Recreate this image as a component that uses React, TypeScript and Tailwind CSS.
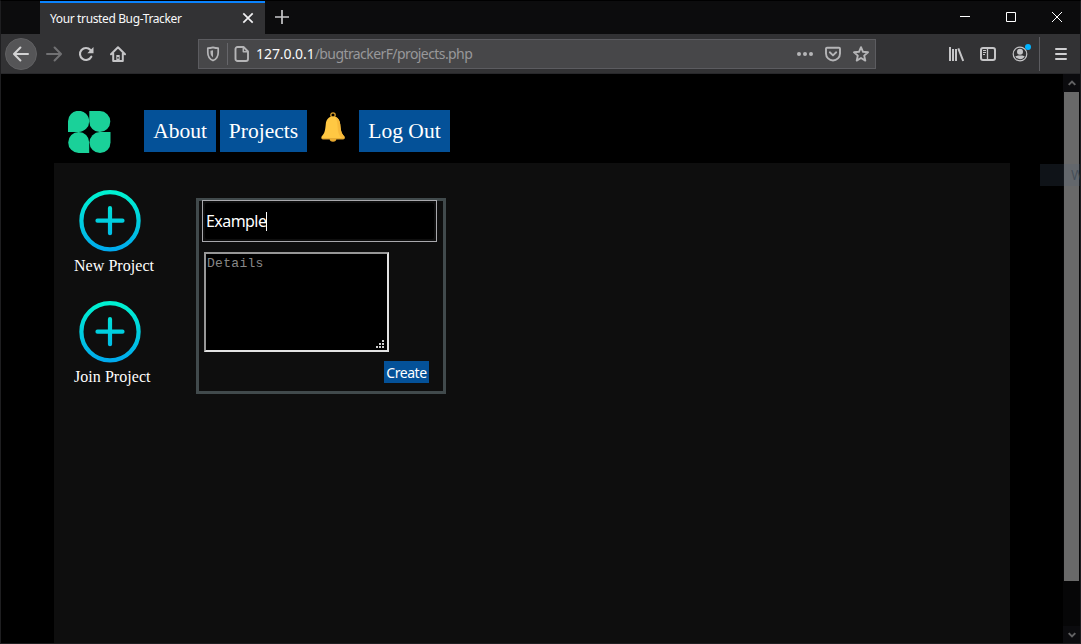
import React from "react";

const ui = "font-['Noto_Sans','Open_Sans',sans-serif]";
const serif = "font-['Liberation_Serif',serif]";

function TabStrip() {
  return (
    <div className="flex h-[33px] shrink-0 bg-[#0c0c0d]">
      <div className="ml-[39px] flex h-[33px] w-[225px] items-center border-t-2 border-[#0a84ff] bg-[#323234] pl-[10px]">
        <span className={`${ui} w-[191px] whitespace-nowrap text-[12px] leading-[18px] tracking-[-0.37px] text-[#f9f9fa]`}>
          Your trusted Bug-Tracker
        </span>
        <svg className="-mt-[2px]" width="14" height="14" viewBox="0 0 14 14" fill="none" stroke="#f0f0f2" strokeWidth="1.7">
          <path d="M2.3 2.3l9.4 9.4M11.7 2.3l-9.4 9.4" />
        </svg>
      </div>
      <svg className="ml-[10px] mt-[9px]" width="14" height="14" viewBox="0 0 14 14" fill="none" stroke="#c8c8ca" strokeWidth="1.7">
        <path d="M7 0v14M0 7h14" />
      </svg>
      <div className="ml-auto flex pt-[11px]">
        <svg width="10" height="10" viewBox="0 0 10 10"><path d="M0 4.5h10" stroke="#fff" /></svg>
        <svg className="ml-9" width="10" height="10" viewBox="0 0 10 10"><path d="M.5.5h9v9h-9z" fill="none" stroke="#fff" /></svg>
        <svg className="ml-9 mr-[18px]" width="10" height="10" viewBox="0 0 10 10"><path d="M0 0l10 10M10 0L0 10" fill="none" stroke="#fff" /></svg>
      </div>
    </div>
  );
}

function AddressBar() {
  return (
    <div className="ml-[72px] flex h-[30px] w-[678px] shrink-0 items-center border border-[#5c5c60] bg-[#474749]">
      <svg className="ml-[6px] shrink-0" width="16" height="16" viewBox="0 0 16 16" fill="none" stroke="#b5b5b7" strokeWidth="1.7">
        <path d="M8 1.4c-2 .6-3.500.8-5.200.8v4.200c0 3.700 1.700 6.600 5.200 8.200 3.500-1.600 5.200-4.500 5.200-8.200V2.200C11.500 2.200 10 2 8 1.400z" strokeLinejoin="round" />
        <path d="M8 4.200v7.200C6.200 10 5.500 8.500 5.500 6.500V4.700z" fill="#b5b5b7" stroke="none" />
      </svg>
      <div className="ml-[6px] h-[22px] w-px shrink-0 bg-[#66666a]" />
      <svg className="ml-[6px] shrink-0" width="16" height="16" viewBox="0 0 16 16" fill="none" stroke="#b5b5b7" strokeWidth="1.900" strokeLinejoin="round">
        <path d="M3.500 1h6L14 5.500V13a2 2 0 0 1-2 2H3.500a2 2 0 0 1-2-2V3a2 2 0 0 1 2-2z" />
        <path d="M9.300 1v4.700H14" strokeWidth="1.500" />
      </svg>
      <span className={`${ui} ml-[6px] mt-px whitespace-nowrap text-[14px] leading-[20px] tracking-[-0.58px] text-[#98989a]`}>
        <span className="tracking-[-0.07px] text-[#f9f9fa]">127.0.0.1</span>/bugtrackerF/projects.php
      </span>
      <svg className="ml-auto" width="16" height="16" viewBox="0 0 16 16" fill="#b5b5b7">
        <circle cx="2" cy="8" r="2" /><circle cx="8" cy="8" r="2" /><circle cx="14" cy="8" r="2" />
      </svg>
      <svg className="ml-3" width="16" height="16" viewBox="0 0 16 16" fill="none" stroke="#b5b5b7" strokeWidth="1.900" strokeLinecap="round" strokeLinejoin="round">
        <path d="M2 1.700h12a1 1 0 0 1 1 1V7.500a7 7 0 0 1-14 0V2.700a1 1 0 0 1 1-1z" />
        <path d="M4.800 6.300L8 9.400l3.200-3.100" />
      </svg>
      <svg className="ml-3 mr-[6px]" width="16" height="16" viewBox="0 0 16 16" fill="none" stroke="#b5b5b7" strokeWidth="1.900" strokeLinejoin="round">
        <path d="M8 1.200l2 4.600 5 .5-3.800 3.300 1.100 5L8 12l-4.300 2.600 1.100-5L1 6.300l5-.5z" />
      </svg>
    </div>
  );
}

function Toolbar() {
  return (
    <div className="flex h-10 shrink-0 items-center border-b border-[#28282b] bg-[#323234]">
      <div className="ml-1 flex size-8 shrink-0 items-center justify-center rounded-full border border-[#606062] bg-[#555557]">
        <svg width="16" height="16" viewBox="0 0 16 16" fill="none" stroke="#d3d3d4" strokeWidth="2" strokeLinecap="round" strokeLinejoin="round">
          <path d="M15 8H1.200M7.400 1.500L1 8l6.400 6.500" />
        </svg>
      </div>
      <svg className="ml-[9px]" width="16" height="16" viewBox="0 0 16 16" fill="none" stroke="#717173" strokeWidth="2" strokeLinecap="round" strokeLinejoin="round">
        <path d="M1 8h13.800M8.600 1.500L15 8l-6.400 6.500" />
      </svg>
      <svg className="ml-4" width="16" height="16" viewBox="0 0 16 16" fill="none" stroke="#c5c5c7" strokeWidth="2.100" strokeLinecap="round">
        <path d="M13.300 10.700A6 6 0 1 1 12.500 4" />
        <path d="M15.500 1v6.200H9.300z" fill="#c5c5c7" stroke="none" />
      </svg>
      <svg className="ml-4" width="16" height="16" viewBox="0 0 16 16" fill="none" stroke="#c5c5c7" strokeWidth="2" strokeLinecap="round" strokeLinejoin="round">
        <path d="M1 8.200l7-7 7 7M3.200 7.500V15h9.600V7.500" />
        <path d="M6.300 9h3.400v6H6.300z" fill="#c5c5c7" stroke="none" /><circle cx="8" cy="11.800" r=".9" fill="#323234" stroke="none" />
      </svg>
      <AddressBar />
      <svg className="ml-[72px]" width="16" height="16" viewBox="0 0 16 16" fill="none" stroke="#c5c5c7" strokeWidth="2">
        <path d="M2 1v14M5 3v12M8 3v12M10.300 2.400L15.200 15" />
      </svg>
      <svg className="ml-4" width="16" height="16" viewBox="0 0 16 16" fill="none" stroke="#c5c5c7" strokeWidth="2">
        <rect x="1" y="2" width="14" height="12" rx="2" />
        <path d="M7.500 2v12" strokeWidth="1.300" /><path d="M3 4.500h3M3 6.500h3M3 8.500h2" strokeWidth="1" />
      </svg>
      <div className="relative ml-4 size-4">
        <svg width="16" height="16" viewBox="0 0 16 16">
          <circle cx="8" cy="8" r="6.800" fill="none" stroke="#c5c5c7" strokeWidth="1.200" />
          <circle cx="8" cy="5.700" r="3" fill="#c5c5c7" />
          <path d="M3.300 10.200c1 .1 2.200-.7 3-.7h3.400c.8 0 2 .8 3 .7A5.200 5.200 0 0 1 3.300 10.200z" fill="#c5c5c7" />
        </svg>
        <span className="absolute -top-[2px] left-[13px] size-[6px] rounded-full bg-[#00b3ff]" />
      </div>
      <div className="ml-[11px] h-[34px] w-px bg-[#5c5c60]" />
      <svg className="ml-[15px]" width="12" height="14" viewBox="0 0 12 14" fill="none" stroke="#d0d0d2" strokeWidth="2" strokeLinecap="round">
        <path d="M1 2h10M1 7h10M1 12h10" />
      </svg>
    </div>
  );
}

function Logo() {
  return (
    <svg className="mt-px" width="43" height="42" viewBox="0 0 43 42" fill="#1ad199">
      <path d="M0 21V10.600a10.600 10.600 0 1 1 10.600 10.400z" />
      <path d="M21.300 0h10.600a10.500 10.500 0 1 1-10.600 10.500z" />
      <path d="M21.200 42H10.600A10.500 10.500 0 1 1 21.200 31.500z" />
      <path d="M42.500 21v10.500a10.500 10.500 0 1 1-10.600-10.500z" />
    </svg>
  );
}

function Bell() {
  return (
    <svg width="24" height="31" viewBox="0 0 24 31">
      <circle cx="12" cy="3" r="2.200" fill="none" stroke="#d99e2b" strokeWidth="1.300" />
      <ellipse cx="12" cy="27" rx="3.300" ry="2.800" fill="#e8a82e" />
      <path d="M12 4.500c4.600 0 6.700 3.300 7.200 7.600.6 5.600.8 9.200 4 12.100.8.800.5 3-1 3h-20.400c-1.500 0-1.800-2.200-1-3 3.200-2.900 3.400-6.500 4-12.100C5.300 7.800 7.400 4.500 12 4.500z" fill="#ffc843" />
      <path d="M14.500 5c3 1 4.300 3.700 4.700 7.100.6 5.600.8 9.200 4 12.100.5.500.5 1.800 0 2.500-4-1-6.200-4.500-6.500-10.700-.2-4-.5-8-2.200-11z" fill="#f7b93a" />
      <path d="M.6 26.300h22.800c-.2.600-.6.900-1.200.9H1.800c-.6 0-1-.3-1.200-.9z" fill="#dda02d" />
    </svg>
  );
}

function NavButton({ label, width }: { label: string; width: string }) {
  return (
    <button className={`${serif} ${width} h-[42px] whitespace-nowrap bg-[#045198] text-center text-[21.5px] leading-[43px] text-white`}>
      {label}
    </button>
  );
}

function AddAction({ label, id }: { label: string; id: string }) {
  return (
    <div className="flex h-[111px] flex-col items-start">
      <svg className="ml-[5px]" width="62" height="62" viewBox="0 0 62 62" fill="none">
        <defs>
          <linearGradient id={id} gradientUnits="userSpaceOnUse" x1="0" y1="0" x2="0" y2="62">
            <stop stopColor="#00f2d2" /><stop offset=".08" stopColor="#00efd1" /><stop offset="1" stopColor="#00a8ef" />
          </linearGradient>
        </defs>
        <circle cx="31" cy="30.700" r="28.600" stroke={`url(#${id})`} strokeWidth="4.200" />
        <path d="M31 18.200v25M18.500 30.700h25" stroke={`url(#${id})`} strokeWidth="4.200" strokeLinecap="round" />
      </svg>
      <span className={`${serif} mt-[4px] whitespace-nowrap text-[16px] leading-[20px] tracking-[0.05px] text-white`}>{label}</span>
    </div>
  );
}

function ProjectForm() {
  return (
    <form className="mt-[35px] flex h-[196px] w-[250px] flex-col items-start border-[3px] border-[#414a4c]">
      <div className="-mt-px ml-[3px] h-[42px] w-[235px] border border-[#a9a9ad] bg-[#0e0e0e] p-[2px]">
        <div className={`${ui} flex h-full items-center rounded-[2px] bg-black pl-px text-[16px] tracking-[-0.56px] text-white`}>
          <span>Example</span><span className="h-[19px] w-px bg-white" />
        </div>
      </div>
      <div className="relative ml-[5px] mt-[10px] h-[100px] w-[185px] border-2 border-b-[#e3e3e3] border-l-[#979797] border-r-[#e3e3e3] border-t-[#979797] bg-black pl-px pt-[2px] font-['Liberation_Mono',monospace] text-[13px] leading-[15px] tracking-[0.3px] text-[#888888]">
        Details
        <svg className="absolute bottom-[2px] right-[3px]" width="8" height="8" viewBox="0 0 8 8" fill="#d0d0d0" shapeRendering="crispEdges">
          <path d="M6 0h2v2H6zM3 3h2v2H3zM6 3h2v2H6zM0 6h2v2H0zM3 6h2v2H3zM6 6h2v2H6z" />
        </svg>
      </div>
      <button type="button" className={`${ui} ml-[185px] mt-[9px] h-[22px] w-[45px] bg-[#045198] pt-px text-[14px] leading-[22px] tracking-[-0.45px] text-white`}>
        Create
      </button>
    </form>
  );
}

function Scrollbar() {
  return (
    <div className="relative flex w-[17px] shrink-0 flex-col items-center bg-[#060607]">
      <div className="flex h-[18px] w-full items-center justify-center bg-[#0b0b0e]">
        <svg width="8" height="6" viewBox="0 0 8 6" fill="none" stroke="#626263" strokeWidth="2"><path d="M.7 4.900L4 1.600l3.300 3.300" /></svg>
      </div>
      <div className="h-[489px] w-[15px] bg-[#696969]" />
      <div className="mt-auto flex h-[17px] w-full items-center justify-center bg-[#0b0b0e]">
        <svg width="8" height="6" viewBox="0 0 8 6" fill="none" stroke="#626263" strokeWidth="2"><path d="M.7 1.100L4 4.400l3.300-3.300" /></svg>
      </div>
      <div className={`${ui} absolute right-0 top-[90px] h-[22px] w-10 overflow-hidden bg-[#4a6078]/20 pl-[31px] text-[14px] leading-[22px] text-[#33404c]/60`}>W</div>
    </div>
  );
}

export default function App() {
  return (
    <div className="flex h-[644px] w-[1081px] flex-col overflow-hidden border border-[#1e1e20] border-t-black bg-black">
      <TabStrip />
      <Toolbar />
      <div className="flex min-h-0 flex-1">
        <main className="flex min-w-0 flex-1 flex-col bg-black">
          <nav className="flex h-[89px] shrink-0 items-start pl-[67px] pt-[36px]">
            <Logo />
            <div className="ml-[33px] flex gap-1">
              <NavButton label="About" width="w-[72px]" />
              <NavButton label="Projects" width="w-[87px]" />
            </div>
            <div className="ml-[14px] mt-[2px]"><Bell /></div>
            <div className="ml-[14px]"><NavButton label="Log Out" width="w-[91px]" /></div>
          </nav>
          <section className="ml-[53px] flex w-[956px] flex-1 items-start bg-[#0e0e0e]">
            <aside className="w-[142px] pl-5 pt-[27px]">
              <AddAction label="New Project" id="new-ring" />
              <AddAction label="Join Project" id="join-ring" />
            </aside>
            <ProjectForm />
          </section>
        </main>
        <Scrollbar />
      </div>
    </div>
  );
}
